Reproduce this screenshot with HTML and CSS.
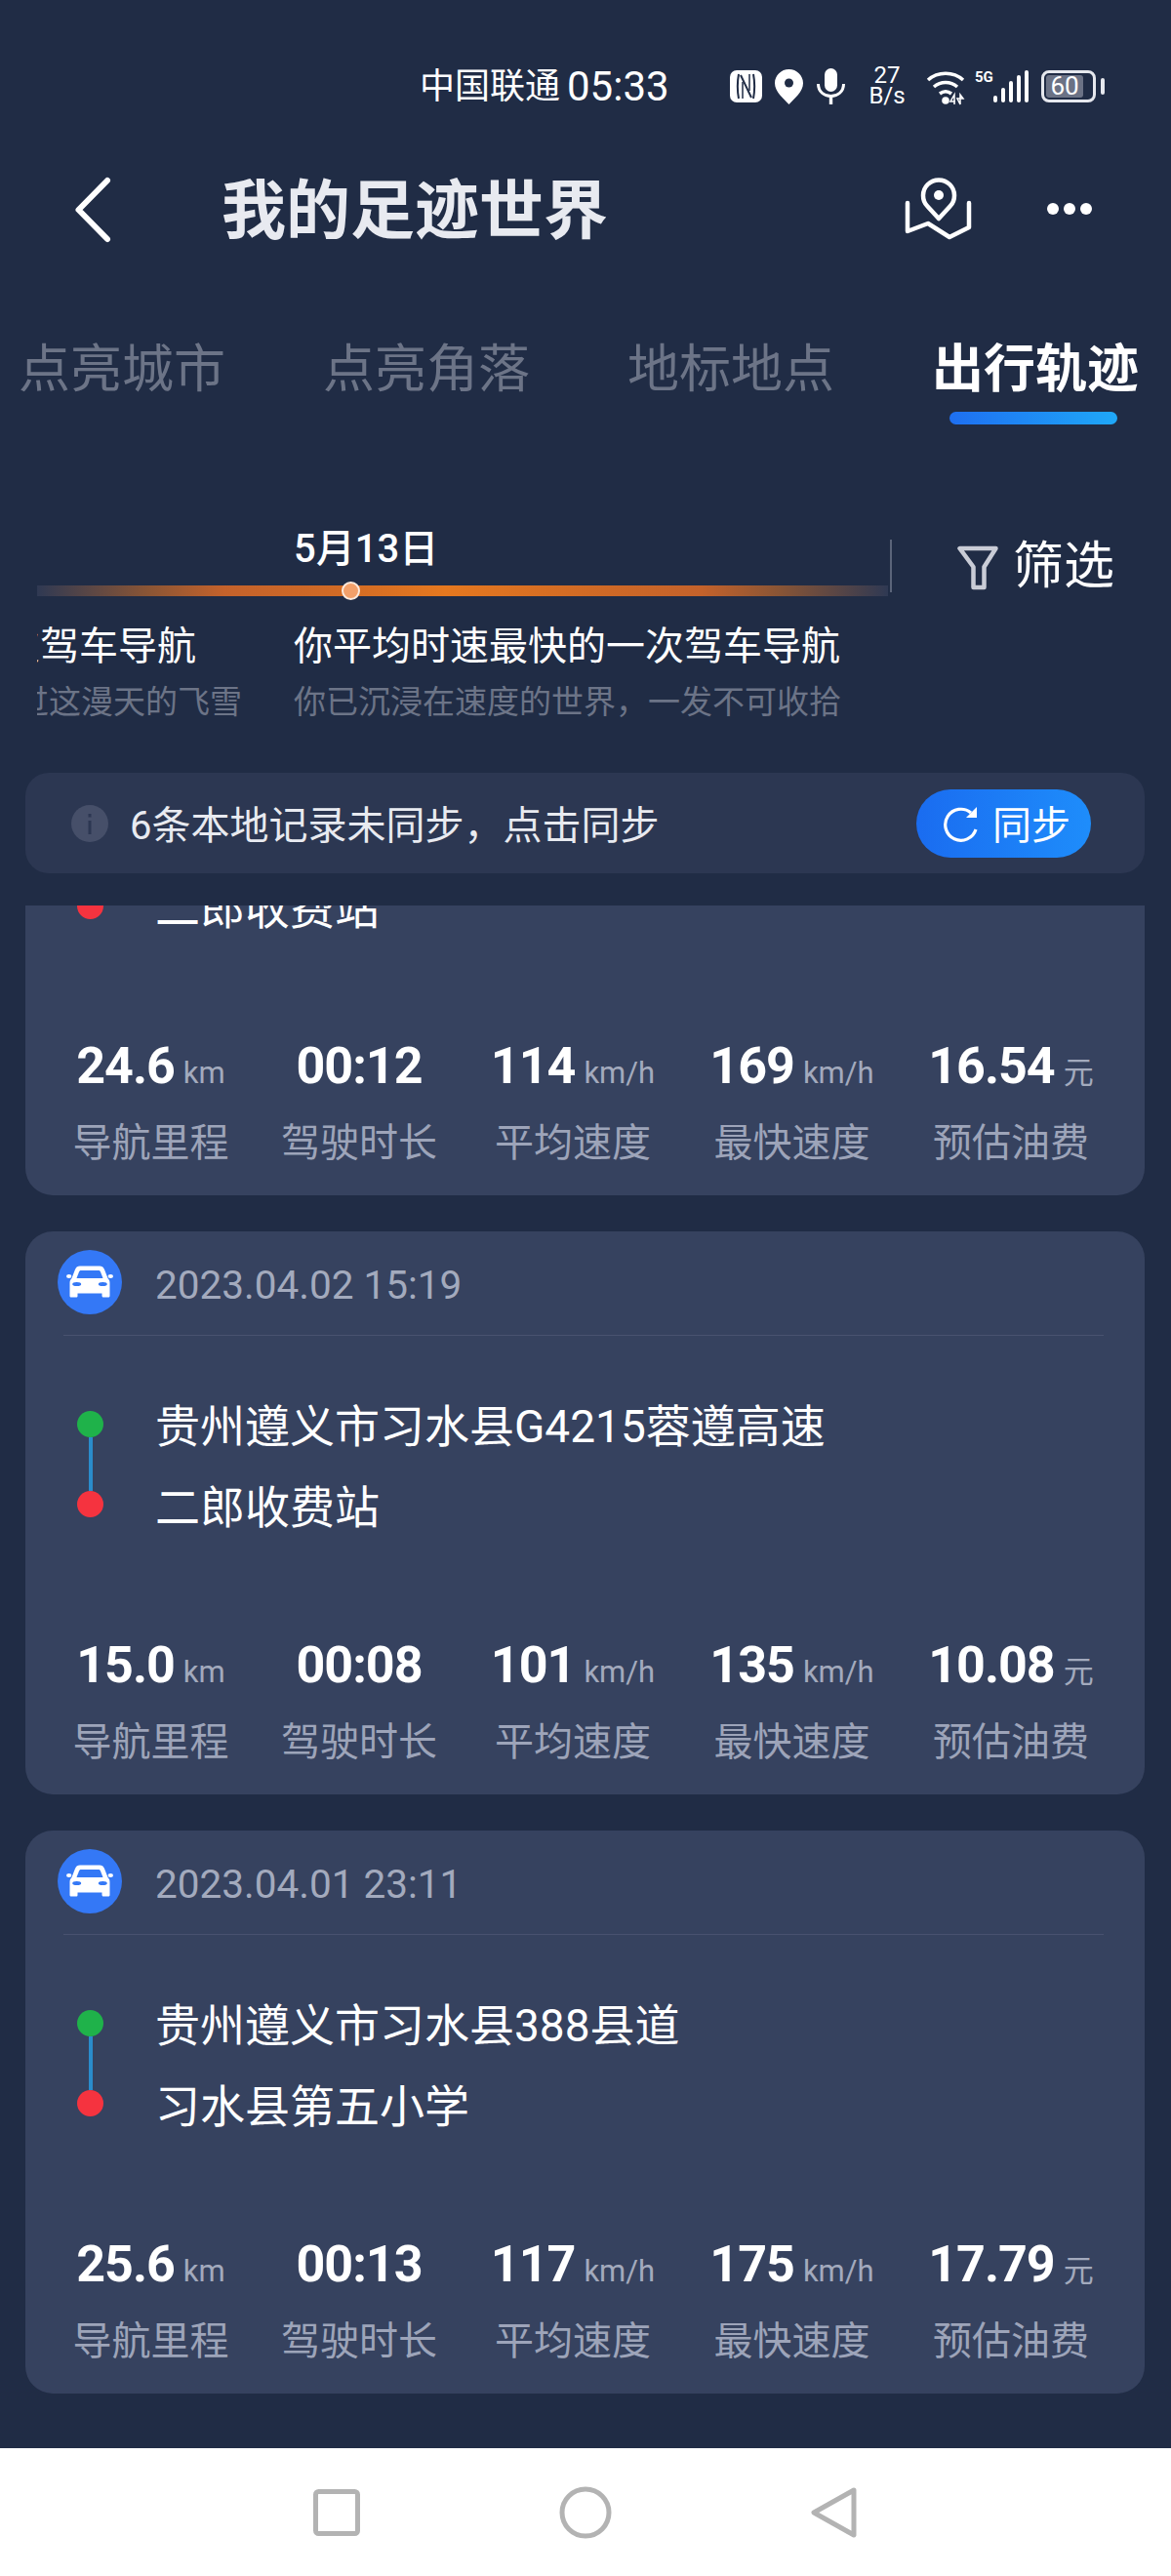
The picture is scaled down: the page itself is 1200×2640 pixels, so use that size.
FILE: index.html
```html
<!DOCTYPE html>
<html lang="zh-CN">

<head>
  <title>我的足迹世界</title>
  <link rel="stylesheet" href="styles.css">
</head>

<body>
  <div class="status">
    <span class="carrier">中国联通</span>
    <span class="clock">05:33</span>
    <svg class="st-nfc" width="33" height="33" viewBox="0 0 33 33">
      <rect width="33" height="33" rx="7" fill="#fff"/>
      <path d="M9 4c-1.500 8-1.500 17 0 25M24 4c1.500 8 1.500 17 0 25" fill="none" stroke="#202c45" stroke-width="2"/>
      <path d="M11 5l11 23" stroke="#202c45" stroke-width="2" fill="none"/>
      <path d="M13 29V12M20 4v17" stroke="#202c45" stroke-width="1.500" fill="none"/>
    </svg>
    <svg class="st-pin" width="29" height="36" viewBox="0 0 29 36">
      <path d="M14.5 0C6.5 0 0 6.300 0 14.200 0 23 9 30 14.500 36 20 30 29 23 29 14.200 29 6.300 22.500 0 14.500 0z" fill="#fff"/>
      <circle cx="14.500" cy="14" r="4.500" fill="#202c45"/>
    </svg>
    <svg class="st-mic" width="29" height="37" viewBox="0 0 29 37">
      <rect x="8" y="0" width="13" height="24" rx="6.500" fill="#fff"/>
      <path d="M1.500 16c0 8 6 12.500 13 12.500s13-4.500 13-12.500" fill="none" stroke="#fff" stroke-width="3"/>
      <rect x="12.800" y="28" width="3.400" height="9" fill="#fff"/>
    </svg>
    <div class="st-speed"><span>27</span><span>B/s</span></div>
    <svg class="st-wifi" width="40" height="36" viewBox="0 0 40 36">
      <path d="M2 10C12 1 28 1 38 10M8 17c7-6 17-6 24 0M14 24c4-3 8-3 12 0" fill="none" stroke="#fff" stroke-width="3.500"/>
      <circle cx="20" cy="31" r="3.800" fill="#fff"/>
      <path d="M29 35V25l-4 7h5M35 35V25l3 4h-6z" fill="none" stroke="#fff" stroke-width="1.500"/>
    </svg>
    <div class="st-net">
      <span class="st-5g">5G</span>
      <svg width="36" height="33" viewBox="0 0 36 33" fill="#fff">
        <rect x="0" y="26" width="4" height="7" rx="2"/>
        <rect x="8" y="18" width="4" height="15" rx="2"/>
        <rect x="16" y="11" width="4" height="22" rx="2"/>
        <rect x="24" y="5" width="4" height="28" rx="2"/>
        <rect x="32" y="0" width="4" height="33" rx="2"/>
      </svg>
    </div>
    <div class="battery"><div class="battery-fill">60</div></div>
    <div class="battery-nub"></div>
  </div>

  <header class="top">
    <svg class="back" width="50" height="72" viewBox="0 0 50 72">
      <path d="M37 6L7.500 36L37 66" fill="none" stroke="#fff" stroke-width="6" stroke-linecap="round" stroke-linejoin="round"/>
    </svg>
    <h1 class="title">我的足迹世界</h1>
    <svg class="map-btn" width="72" height="68" viewBox="0 0 72 68">
      <path d="M36 44L24.500 31.500A16 16 0 1 1 47.500 31.500Z" fill="none" stroke="#fff" stroke-width="4.500" stroke-linejoin="round"/>
      <circle cx="36" cy="20" r="5" fill="#fff"/>
      <path d="M4 28V57L25 49L47 63L67 53V28" fill="none" stroke="#fff" stroke-width="4.500" stroke-linecap="round" stroke-linejoin="round"/>
    </svg>
    <svg class="more" width="46" height="12" viewBox="0 0 46 12" fill="#fff">
      <circle cx="6" cy="6" r="6"/><circle cx="23" cy="6" r="6"/><circle cx="40" cy="6" r="6"/>
    </svg>
  </header>

  <nav class="tabs">
    <div class="tab">点亮城市</div>
    <div class="tab">点亮角落</div>
    <div class="tab">地标地点</div>
    <div class="tab tab-on">出行轨迹</div>
  </nav>

  <section class="tl-row">
    <div class="timeline">
      <div class="tl-date">5月13日</div>
      <div class="tl-track"><span class="tl-dot"></span></div>
      <div class="tl-items">
        <div class="tl-item tl-item-prev">
          <div class="tl-head">一次驾车导航</div>
          <div class="tl-sub">穿过这漫天的飞雪</div>
        </div>
        <div class="tl-item">
          <div class="tl-head">你平均时速最快的一次驾车导航</div>
          <div class="tl-sub">你已沉浸在速度的世界，一发不可收拾</div>
        </div>
      </div>
    </div>
    <div class="tl-divider"></div>
    <div class="filter">
      <svg width="46" height="49" viewBox="0 0 46 49">
        <path d="M4.500 5H41.500L29.500 24V45H18.500V24Z" fill="none" stroke="#c9ccd6" stroke-width="4.500" stroke-linejoin="round"/>
      </svg>
      <span>筛选</span>
    </div>
  </section>

  <div class="sync">
    <svg width="38" height="38" viewBox="0 0 38 38">
      <circle cx="19" cy="19" r="19" fill="#464f69"/>
      <rect x="17.500" y="16" width="3" height="14" fill="#2c3752"/>
      <rect x="17.500" y="9" width="3" height="3.500" fill="#2c3752"/>
    </svg>
    <span class="sync-text">6条本地记录未同步，点击同步</span>
    <div class="sync-btn">
      <svg width="40" height="40" viewBox="0 0 40 40">
        <path d="M30 9A16 16 0 1 0 35 26" fill="none" stroke="#fff" stroke-width="3.200"/>
        <path d="M36 3V14H25Z" fill="#fff"/>
      </svg>
      <span class="sync-btn-text">同步</span>
    </div>
  </div>

  <main class="list">
    <article class="card card-cut">
      <div class="route route-cut">
        <div class="rail"><span class="dot dot-red"></span></div>
        <div class="places"><div>二郎收费站</div></div>
      </div>
      <div class="stats">
        <div class="stat"><div class="val">24.6<small>km</small></div><div class="lbl">导航里程</div></div>
        <div class="stat"><div class="val">00:12</div><div class="lbl">驾驶时长</div></div>
        <div class="stat"><div class="val">114<small>km/h</small></div><div class="lbl">平均速度</div></div>
        <div class="stat"><div class="val">169<small>km/h</small></div><div class="lbl">最快速度</div></div>
        <div class="stat"><div class="val">16.54<small>元</small></div><div class="lbl">预估油费</div></div>
      </div>
    </article>

    <article class="card">
      <div class="card-head">
        <svg class="car" width="66" height="66" viewBox="0 0 66 66">
          <circle cx="33" cy="33" r="33" fill="#3478f6"/>
          <path d="M23 16.500h20c2.500 0 4 1 5 3.500l3.500 9c1.500 1.500 2 3 2 5v13c0 1-.7 1.500-1.500 1.500h-5c-1 0-1.500-.7-1.500-1.500v-2.500h-25v2.500c0 1-.5 1.500-1.500 1.500h-5c-.8 0-1.500-.5-1.500-1.500v-13c0-2 .5-3.500 2-5l3.500-9c1-2.500 2.500-3.500 5-3.500z" fill="#fff"/>
          <path d="M24 21h18c1 0 1.500.5 2 1.500l2.500 6.500h-27l2.500-6.500c.5-1 1-1.500 2-1.500z" fill="#3478f6"/>
          <ellipse cx="19.700" cy="35" rx="4.500" ry="2" fill="#3478f6"/>
          <ellipse cx="46.300" cy="35" rx="4.500" ry="2" fill="#3478f6"/>
          <ellipse cx="11.700" cy="27" rx="2.700" ry="2" fill="#fff"/>
          <ellipse cx="54.300" cy="27" rx="2.700" ry="2" fill="#fff"/>
        </svg>
        <span class="card-date">2023.04.02 15:19</span>
      </div>
      <div class="card-line"></div>
      <div class="route">
        <div class="rail"><span class="dot dot-green"></span><span class="rail-line"></span><span class="dot dot-red"></span></div>
        <div class="places"><div>贵州遵义市习水县G4215蓉遵高速</div><div>二郎收费站</div></div>
      </div>
      <div class="stats">
        <div class="stat"><div class="val">15.0<small>km</small></div><div class="lbl">导航里程</div></div>
        <div class="stat"><div class="val">00:08</div><div class="lbl">驾驶时长</div></div>
        <div class="stat"><div class="val">101<small>km/h</small></div><div class="lbl">平均速度</div></div>
        <div class="stat"><div class="val">135<small>km/h</small></div><div class="lbl">最快速度</div></div>
        <div class="stat"><div class="val">10.08<small>元</small></div><div class="lbl">预估油费</div></div>
      </div>
    </article>

    <article class="card">
      <div class="card-head">
        <svg class="car" width="66" height="66" viewBox="0 0 66 66">
          <circle cx="33" cy="33" r="33" fill="#3478f6"/>
          <path d="M23 16.500h20c2.500 0 4 1 5 3.500l3.500 9c1.500 1.500 2 3 2 5v13c0 1-.7 1.500-1.500 1.500h-5c-1 0-1.500-.7-1.500-1.500v-2.500h-25v2.500c0 1-.5 1.500-1.500 1.500h-5c-.8 0-1.500-.5-1.500-1.500v-13c0-2 .5-3.500 2-5l3.500-9c1-2.500 2.500-3.500 5-3.500z" fill="#fff"/>
          <path d="M24 21h18c1 0 1.500.5 2 1.500l2.500 6.500h-27l2.500-6.500c.5-1 1-1.500 2-1.500z" fill="#3478f6"/>
          <ellipse cx="19.700" cy="35" rx="4.500" ry="2" fill="#3478f6"/>
          <ellipse cx="46.300" cy="35" rx="4.500" ry="2" fill="#3478f6"/>
          <ellipse cx="11.700" cy="27" rx="2.700" ry="2" fill="#fff"/>
          <ellipse cx="54.300" cy="27" rx="2.700" ry="2" fill="#fff"/>
        </svg>
        <span class="card-date">2023.04.01 23:11</span>
      </div>
      <div class="card-line"></div>
      <div class="route">
        <div class="rail"><span class="dot dot-green"></span><span class="rail-line"></span><span class="dot dot-red"></span></div>
        <div class="places"><div>贵州遵义市习水县388县道</div><div>习水县第五小学</div></div>
      </div>
      <div class="stats">
        <div class="stat"><div class="val">25.6<small>km</small></div><div class="lbl">导航里程</div></div>
        <div class="stat"><div class="val">00:13</div><div class="lbl">驾驶时长</div></div>
        <div class="stat"><div class="val">117<small>km/h</small></div><div class="lbl">平均速度</div></div>
        <div class="stat"><div class="val">175<small>km/h</small></div><div class="lbl">最快速度</div></div>
        <div class="stat"><div class="val">17.79<small>元</small></div><div class="lbl">预估油费</div></div>
      </div>
    </article>
  </main>

  <footer class="navbar">
    <svg width="54" height="60" viewBox="0 0 54 60">
      <rect x="5.500" y="8.500" width="43" height="43" rx="3" fill="none" stroke="#b3b3b3" stroke-width="5"/>
    </svg>
    <svg width="60" height="60" viewBox="0 0 60 60">
      <circle cx="30" cy="30" r="24" fill="none" stroke="#b3b3b3" stroke-width="5"/>
    </svg>
    <svg width="54" height="60" viewBox="0 0 54 60">
      <path d="M47 7L6 30L47 53Z" fill="none" stroke="#b3b3b3" stroke-width="5" stroke-linejoin="round"/>
    </svg>
  </footer>
</body>

</html>
```

FILE: styles.css
```css
* {
  box-sizing: border-box;
}

body {
  margin: 0;
  width: 1200px;
  height: 2640px;
  overflow: hidden;
  background-color: #202c45;
  color: #fff;
  font-family: Roboto, "Noto Sans CJK SC", sans-serif;
  display: flex;
  flex-direction: column;
}

/* status bar */
.status {
  height: 160px;
  flex: none;
  display: flex;
  align-items: flex-start;
  padding: 68px 0 0 430px;
}

.carrier {
  font-size: 36px;
  line-height: 42px;
  width: 151px;
}

.clock {
  font-size: 42px;
  line-height: 42px;
  width: 167px;
}

.st-nfc {
  margin-top: 4px;
}

.st-pin {
  margin: 3px 0 0 13px;
}

.st-mic {
  margin: 2px 0 0 14px;
}

.st-speed {
  width: 40px;
  margin: -1px 0 0 23px;
  display: flex;
  flex-direction: column;
  align-items: center;
  font-size: 24px;
  line-height: 21px;
}

.st-wifi {
  margin: 4px 0 0 20px;
}

.st-net {
  display: flex;
  align-items: flex-start;
  margin: 4px 0 0 10px;
}

.st-5g {
  width: 19px;
  font-size: 15px;
  line-height: 15px;
  font-weight: 700;
}

.battery {
  width: 56px;
  height: 33px;
  margin: 4px 0 0 13px;
  border: 3px solid #e6e8ee;
  border-radius: 8px;
  padding: 2px;
}

.battery-fill {
  width: 38px;
  height: 23px;
  background-color: #6b7285;
  border-radius: 3px;
  font-size: 26px;
  line-height: 23px;
  text-align: center;
  white-space: nowrap;
}

.battery-nub {
  width: 4px;
  height: 17px;
  margin: 12px 0 0 5px;
  background-color: #e6e8ee;
  border-radius: 2px;
}

/* title row */
.top {
  height: 106px;
  flex: none;
  display: flex;
  align-items: center;
  padding: 0 81px 0 73px;
}

.back {
  margin-top: 4px;
}

.title {
  margin: 0 0 6px 104px;
  font-size: 66px;
  font-weight: 700;
  color: #e8eaf0;
}

.map-btn {
  margin: 2px 75px 0 auto;
}

.more {
  margin-top: 2px;
}

/* tabs */
.tabs {
  flex: none;
  height: 274px;
  display: flex;
  gap: 104px;
  padding: 83px 0 0 19px;
}

.tab {
  width: 208px;
  font-size: 53px;
  line-height: 60px;
  color: #6c7487;
  white-space: nowrap;
}

.tab-on {
  color: #fff;
  font-weight: 700;
}

.tab-on::after {
  content: "";
  display: block;
  width: 172px;
  height: 13px;
  margin: 13px 0 0 18px;
  border-radius: 7px;
  background: linear-gradient(90deg, #1e6ff1, #1fa8f8);
}

/* timeline */
.tl-row {
  flex: none;
  height: 252px;
  display: flex;
  align-items: flex-start;
  padding-left: 38px;
}

.timeline {
  width: 874px;
  height: 202px;
  overflow: hidden;
}

.tl-date {
  height: 60px;
  padding-left: 263px;
  font-size: 40px;
  line-height: 46px;
  font-weight: 500;
}

.tl-track {
  position: relative;
  width: 872px;
  height: 11px;
  background: linear-gradient(90deg, #2f3953 0%, #8a5535 13%, #c4622b 22%, #d06a25 35%, #e5781f 48%, #d06a25 65%, #c4622b 78%, #8a5535 87%, #2f3953 100%);
}

.tl-dot {
  position: absolute;
  left: 312px;
  top: -4px;
  width: 19px;
  height: 19px;
  border-radius: 50%;
  background-color: #f2a06a;
  border: 2px solid #fbe9dc;
}

.tl-items {
  display: flex;
  gap: 53px;
  margin-top: 27px;
  white-space: nowrap;
}

.tl-item {
  flex: none;
}

.tl-item-prev {
  width: 210px;
  display: flex;
  flex-direction: column;
  align-items: flex-end;
}

.tl-item-prev .tl-head {
  margin-right: 47px;
}

.tl-head {
  font-size: 40px;
  line-height: 50px;
}

.tl-sub {
  margin-top: 10px;
  font-size: 33px;
  line-height: 44px;
  color: #6c7487;
}

.tl-divider {
  width: 2px;
  height: 54px;
  margin-top: 13px;
  background-color: #5b6479;
}

.filter {
  display: flex;
  align-items: center;
  margin: 11px 0 0 65px;
  font-size: 52px;
  line-height: 60px;
  gap: 13px;
}

/* sync banner */
.sync {
  flex: none;
  height: 103px;
  margin: 0 27px 33px 26px;
  padding: 0 55px 0 47px;
  display: flex;
  align-items: center;
  gap: 22px;
  border-radius: 24px;
  background-color: #2c3752;
  font-size: 40px;
  color: #e8eaf0;
}

.sync-text {
  margin-bottom: 2px;
}

.sync-btn {
  margin-left: auto;
  width: 179px;
  height: 70px;
  padding-left: 26px;
  display: flex;
  align-items: center;
  gap: 12px;
  border-radius: 35px;
  background: linear-gradient(90deg, #1a6cf0, #1e8dfb);
  color: #fff;
}

.sync-btn-text {
  margin-bottom: 2px;
}

/* record list */
.list {
  flex: 1;
  min-height: 0;
  overflow: hidden;
  display: flex;
  flex-direction: column;
  gap: 37px;
  padding: 0 27px 0 26px;
}

.card {
  flex: none;
  height: 577px;
  overflow: hidden;
  border-radius: 28px;
  background-color: #36425f;
}

.card-cut {
  height: 297px;
  border-radius: 0 0 28px 28px;
}

.card-head {
  height: 106px;
  display: flex;
  align-items: flex-start;
  padding: 19px 0 0 33px;
  gap: 34px;
}

.card-date {
  margin-top: 3px;
  font-size: 40.500px;
  line-height: 66px;
  color: #a3aabd;
}

.card-line {
  height: 1px;
  margin: 0 42px 49px 39px;
  background-color: #495270;
}

.route {
  display: flex;
  gap: 53px;
  padding-left: 53px;
  height: 166px;
}

.route-cut {
  margin-top: -41.500px;
  height: 83px;
}

.rail {
  width: 27px;
  padding-top: 28px;
  display: flex;
  flex-direction: column;
  align-items: center;
}

.dot {
  flex: none;
  width: 27px;
  height: 27px;
  border-radius: 50%;
}

.dot-green {
  background-color: #1fb24a;
}

.dot-red {
  background-color: #f5333f;
}

.rail-line {
  flex: none;
  width: 4px;
  height: 55px;
  background-color: #2a8ccb;
}

.places {
  padding-top: 3px;
  font-size: 46px;
  line-height: 83px;
  white-space: nowrap;
}

.stats {
  display: grid;
  grid-template-columns: 159px 159px 170px 170px 170px;
  gap: 54.500px;
  margin: 93px 0 0 49px;
}

.stat {
  display: flex;
  flex-direction: column;
  align-items: center;
  white-space: nowrap;
}

.val {
  height: 60px;
  font-size: 52px;
  line-height: 60px;
  font-weight: 700;
  letter-spacing: -1px;
}

.val small {
  margin-left: 9px;
  font-size: 31px;
  font-weight: 400;
  letter-spacing: 0;
  color: #a3aabd;
}

.lbl {
  margin-top: 24px;
  font-size: 40px;
  line-height: 50px;
  color: #9da4b9;
}

/* android nav */
.navbar {
  flex: none;
  height: 131px;
  display: flex;
  align-items: center;
  gap: 198px;
  padding-left: 318px;
  background-color: #fff;
}
```
